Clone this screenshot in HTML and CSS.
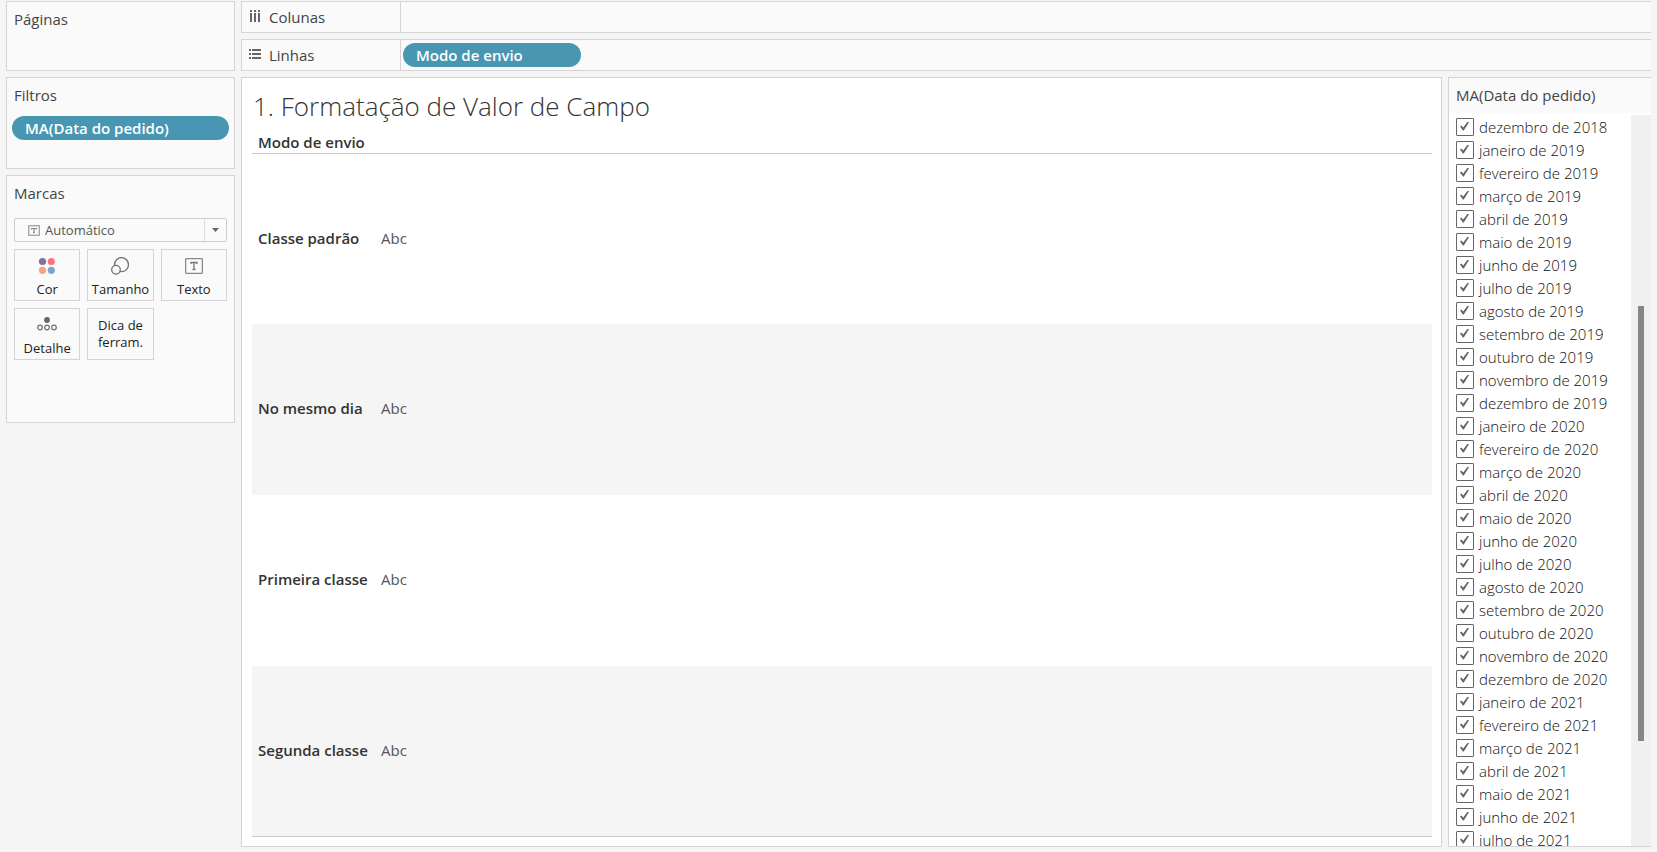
FILE: index.html
```
<!DOCTYPE html>
<html lang="pt-BR">
<head>
<meta charset="utf-8">
<title>Formatação de Valor de Campo</title>
<link rel="stylesheet" href="styles.css">
</head>
<body>
<div class="workspace">
  <aside class="sidebar">
    <section class="card card-pages"><h2 class="card-title">Páginas</h2></section>
    <section class="card card-filters">
      <h2 class="card-title">Filtros</h2>
      <button type="button" class="pill">MA(Data do pedido)</button>
    </section>
    <section class="card card-marks">
      <h2 class="card-title">Marcas</h2>
      <div class="mark-type">
        <svg class="mark-type-icon" width="12" height="11" viewBox="0 0 12 11" aria-hidden="true"><rect x=".75" y=".75" width="10.5" height="9.5" fill="none" stroke="#999" stroke-width="1.2"/><path d="M3.500 4.500V3.500h5v1M6 3.500v4M5 7.500h2" fill="none" stroke="#888" stroke-width="1.200"/></svg>
        <select class="mark-select" aria-label="Tipo de marca"><option>Automático</option></select>
        <span class="mark-arrow"><svg width="7" height="4" viewBox="0 0 7 4" aria-hidden="true"><path d="M0 0h7L3.500 4z" fill="#666"/></svg></span>
      </div>
      <div class="mark-grid">
        <button type="button" class="mark-button"><svg width="18" height="18" viewBox="0 0 18 18" aria-hidden="true"><circle cx="4.500" cy="4.500" r="3.600" fill="#866d9c"/><circle cx="13.300" cy="4.500" r="3.600" fill="#fa7285"/><circle cx="4.500" cy="13.300" r="3.600" fill="#f5a57b"/><circle cx="13.300" cy="13.300" r="3.600" fill="#7fa5cd"/></svg><span>Cor</span></button>
        <button type="button" class="mark-button"><svg width="18" height="18" viewBox="0 0 18 18" fill="#fafafa" stroke="#707070" aria-hidden="true"><circle cx="10.500" cy="7.700" r="7" stroke-width="1.300"/><circle cx="5" cy="12.700" r="4.300" stroke-width="1.300"/></svg><span>Tamanho</span></button>
        <button type="button" class="mark-button"><svg width="18" height="18" viewBox="0 0 18 18" fill="none" aria-hidden="true"><rect x=".6" y="1.600" width="16.800" height="14.800" rx="1" stroke="#888" stroke-width="1.300"/><path d="M6 7V5.500h6V7M9 5.500v7M7.500 12.500h3" stroke="#777" stroke-width="1.300"/></svg><span>Texto</span></button>
        <button type="button" class="mark-button"><svg width="20" height="18" viewBox="0 0 20 18" fill="none" stroke="#707070" aria-hidden="true"><circle cx="10" cy="4" r="2.900" fill="#666" stroke="none"/><circle cx="3" cy="11.500" r="2.300" stroke-width="1.200"/><circle cx="10" cy="11.500" r="2.300" stroke-width="1.200"/><circle cx="17" cy="11.500" r="2.300" stroke-width="1.200"/></svg><span>Detalhe</span></button>
        <button type="button" class="mark-button mark-button-text"><span>Dica de ferram.</span></button>
      </div>
    </section>
  </aside>
  <div class="stage">
    <div class="shelf">
      <div class="shelf-label"><svg width="12" height="14" viewBox="0 0 12 14" fill="#666" aria-hidden="true"><path d="M1 0h2v2H1zM5 0h2v2H5zM9 0h2v2H9zM1 3h2v9H1zM5 3h2v9H5zM9 3h2v9H9z"/></svg>Colunas</div>
      <div class="shelf-drop"></div>
    </div>
    <div class="shelf">
      <div class="shelf-label"><svg width="12" height="14" viewBox="0 0 12 14" fill="#666" aria-hidden="true"><path d="M0 1h2v2H0zM0 5h2v2H0zM0 9h2v2H0zM3 1h9v2H3zM3 5h9v2H3zM3 9h9v2H3z"/></svg>Linhas</div>
      <div class="shelf-drop"><button type="button" class="pill pill-row">Modo de envio</button></div>
    </div>
    <div class="content">
      <main class="view">
        <h1 class="view-title">1. Formatação de Valor de Campo</h1>
        <table class="view-table">
          <thead><tr><th scope="col">Modo de envio</th><td></td></tr></thead>
          <tbody>
            <tr><th scope="row">Classe padrão</th><td>Abc</td></tr>
            <tr><th scope="row">No mesmo dia</th><td>Abc</td></tr>
            <tr><th scope="row">Primeira classe</th><td>Abc</td></tr>
            <tr><th scope="row">Segunda classe</th><td>Abc</td></tr>
          </tbody>
        </table>
      </main>
      <section class="quick-filter">
        <h2 class="filter-title">MA(Data do pedido)</h2>
        <div class="filter-body">
          <div class="filter-list">
            <label class="filter-item"><input type="checkbox" checked>dezembro de 2018</label>
            <label class="filter-item"><input type="checkbox" checked>janeiro de 2019</label>
            <label class="filter-item"><input type="checkbox" checked>fevereiro de 2019</label>
            <label class="filter-item"><input type="checkbox" checked>março de 2019</label>
            <label class="filter-item"><input type="checkbox" checked>abril de 2019</label>
            <label class="filter-item"><input type="checkbox" checked>maio de 2019</label>
            <label class="filter-item"><input type="checkbox" checked>junho de 2019</label>
            <label class="filter-item"><input type="checkbox" checked>julho de 2019</label>
            <label class="filter-item"><input type="checkbox" checked>agosto de 2019</label>
            <label class="filter-item"><input type="checkbox" checked>setembro de 2019</label>
            <label class="filter-item"><input type="checkbox" checked>outubro de 2019</label>
            <label class="filter-item"><input type="checkbox" checked>novembro de 2019</label>
            <label class="filter-item"><input type="checkbox" checked>dezembro de 2019</label>
            <label class="filter-item"><input type="checkbox" checked>janeiro de 2020</label>
            <label class="filter-item"><input type="checkbox" checked>fevereiro de 2020</label>
            <label class="filter-item"><input type="checkbox" checked>março de 2020</label>
            <label class="filter-item"><input type="checkbox" checked>abril de 2020</label>
            <label class="filter-item"><input type="checkbox" checked>maio de 2020</label>
            <label class="filter-item"><input type="checkbox" checked>junho de 2020</label>
            <label class="filter-item"><input type="checkbox" checked>julho de 2020</label>
            <label class="filter-item"><input type="checkbox" checked>agosto de 2020</label>
            <label class="filter-item"><input type="checkbox" checked>setembro de 2020</label>
            <label class="filter-item"><input type="checkbox" checked>outubro de 2020</label>
            <label class="filter-item"><input type="checkbox" checked>novembro de 2020</label>
            <label class="filter-item"><input type="checkbox" checked>dezembro de 2020</label>
            <label class="filter-item"><input type="checkbox" checked>janeiro de 2021</label>
            <label class="filter-item"><input type="checkbox" checked>fevereiro de 2021</label>
            <label class="filter-item"><input type="checkbox" checked>março de 2021</label>
            <label class="filter-item"><input type="checkbox" checked>abril de 2021</label>
            <label class="filter-item"><input type="checkbox" checked>maio de 2021</label>
            <label class="filter-item"><input type="checkbox" checked>junho de 2021</label>
            <label class="filter-item"><input type="checkbox" checked>julho de 2021</label>
          </div>
          <div class="scroll-track"><div class="scroll-thumb"></div></div>
        </div>
      </section>
    </div>
  </div>
</div>
</body>
</html>
```
FILE: styles.css
```
*, *::before, *::after { box-sizing: border-box; }
body {
  margin: 0;
  background: #f5f5f5;
  color: #333;
  font-family: "Open Sans", "Noto Sans", sans-serif;
  font-size: 15px;
  line-height: 20px;
}
button, select { font: inherit; color: inherit; }
h1, h2 { margin: 0; font-weight: 400; }
.workspace { display: flex; gap: 6px; height: 100vh; padding: 1px 6px 5px; }
.sidebar { display: flex; flex-direction: column; gap: 6px; flex: 0 0 229px; }
.card { background: #fafafa; border: 1px solid #d4d4d4; padding: 7px 5px; }
.card-title { color: #444; font-size: 15px; padding-left: 2px; }
.card-pages { height: 70px; }
.card-filters { height: 92px; }
.card-marks { height: 248px; padding: 7px; }
.card-marks .card-title { padding-left: 0; }
.pill {
  display: block;
  width: 100%;
  height: 24px;
  padding: 0 13px;
  border: 0;
  border-radius: 12px;
  background: #4996b2;
  color: #fff;
  font-size: 15px;
  font-weight: 600;
  line-height: 24px;
  text-align: left;
}
.card-filters .pill { margin-top: 11px; }
.mark-type {
  display: flex;
  align-items: center;
  height: 24px;
  margin-top: 15px;
  border: 1px solid #ccc;
  border-radius: 2px;
  color: #555;
  font-size: 13px;
}
.mark-type-icon { margin: 0 5px 0 13px; flex: none; }
.mark-select { flex: 1; height: 22px; padding: 0; border: 0; background: none; appearance: none; }
.mark-arrow { display: flex; align-items: center; justify-content: center; width: 22px; height: 22px; border-left: 1px solid #ddd; }
.mark-grid { display: grid; grid-template-columns: repeat(3, 1fr); gap: 7px; margin-top: 7px; }
.mark-button {
  display: flex;
  flex-direction: column;
  align-items: center;
  justify-content: space-between;
  height: 52px;
  padding: 7px 0 2px;
  border: 1px solid #d4d4d4;
  background: #fafafa;
  color: #222;
  font-size: 13px;
  line-height: 17px;
}
.mark-button-text { padding: 8px; }
.stage { display: flex; flex: 1; flex-direction: column; gap: 6px; min-width: 0; }
.shelf { display: flex; height: 32px; flex: none; border: 1px solid #d4d4d4; border-right: 0; background: #fafafa; }
.shelf-label { display: flex; align-items: center; gap: 8px; width: 159px; padding-left: 7px; border-right: 1px solid #d4d4d4; color: #444; font-size: 15px; }
.shelf-drop { display: flex; align-items: center; padding-left: 2px; }
.pill-row { width: 178px; }
.content { display: flex; flex: 1; gap: 6px; min-height: 0; }
.view { display: flex; flex: 1; flex-direction: column; padding: 10px 9px 9px 10px; border: 1px solid #d4d4d4; background: #fff; }
.view-title { padding-left: 1px; font-size: 26px; font-weight: 300; line-height: 37px; }
.view-table { flex: 1; width: 100%; border-collapse: collapse; border-bottom: 1px solid #ccc; font-size: 15px; text-align: left; }
.view-table thead tr { height: 28px; border-bottom: 1px solid #ccc; }
.view-table th { width: 124px; padding: 0 0 2px 6px; font-weight: 600; white-space: nowrap; }
.view-table thead th { padding-bottom: 1px; vertical-align: bottom; }
.view-table td { padding: 0 0 2px 5px; color: #555; }
.view-table tbody tr { height: 25%; }
.view-table tbody tr:nth-child(even) { background: #f5f5f5; }
.quick-filter { display: flex; flex-direction: column; width: 203px; border: 1px solid #d4d4d4; border-right: 0; background: #fff; }
.filter-title { height: 35px; padding: 7px; background: #fafafa; color: #444; font-size: 15px; }
.filter-body { display: flex; flex: 1; min-height: 0; padding-top: 2px; }
.filter-list { flex: 1; overflow: hidden; }
.filter-item { display: flex; align-items: center; gap: 5px; height: 23px; padding-left: 7px; color: #111; font-size: 15px; font-weight: 300; white-space: nowrap; }
.filter-item input { appearance: none; flex: none; width: 18px; height: 18px; margin: 0; border: 1px solid #666; border-radius: 1px; background: #fff; }
.filter-item input:checked::before { content: ""; display: block; width: 9px; height: 9px; margin: 3px; background: #666; clip-path: polygon(0 55%, 15% 44%, 35% 68%, 86% 0, 100% 8%, 42% 100%, 32% 100%); }
.scroll-track { width: 20px; padding-left: 7px; background: #f0f0f0; }
.scroll-thumb { width: 6px; height: 435px; margin-top: 191px; background: #868686; }
```
